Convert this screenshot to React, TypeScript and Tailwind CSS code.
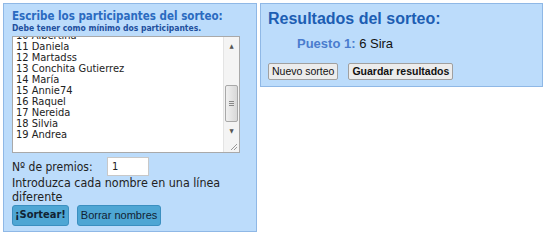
import React from 'react';

const names = [
  '10 Albertina',
  '11 Daniela',
  '12 Martadss',
  '13 Conchita Gutierrez',
  '14 María',
  '15 Annie74',
  '16 Raquel',
  '17 Nereida',
  '18 Silvia',
  '19 Andrea',
];

export default function App() {
  return (
    <div className="w-[550px] h-[244px] bg-white flex items-start gap-[3px] pl-[3px] pt-[3px]" style={{ fontFamily: '"DejaVu Sans Condensed", "DejaVu Sans", Verdana, sans-serif' }}>
      {/* left panel */}
      <div className="w-[254px] h-[229px] bg-[#bcdcfb] border border-[#8fb8e6] px-[8px] pt-[5px] flex flex-col">
        <h2 className="text-[11.5px] leading-[14px] font-bold text-[#2a6ac0] whitespace-nowrap">Escribe los participantes del sorteo:</h2>
        <p className="text-[8.5px] leading-[11px] font-bold text-[#1e4f9e] whitespace-nowrap">Debe tener como mínimo dos participantes.</p>
        <div className="mt-[2px] w-[228px] h-[117px] bg-white border border-[#a9a9a9] flex overflow-hidden">
          <div className="flex-1 overflow-hidden pl-[3px]">
            <div className="-mt-[7px] text-[11px] leading-[11px] text-[#222]">
              {names.map(n => (
                <div key={n}>{n}</div>
              ))}
            </div>
          </div>
          <div className="w-[16px] flex flex-col bg-[#f4f4f4] border-l border-[#e4e4e4]">
            <div className="h-[16px] flex items-center justify-center text-[6px] text-[#555]">▲</div>
            <div className="flex-1 relative">
              <div className="absolute left-[1px] right-[1px] top-[32px] h-[37px] bg-gradient-to-r from-[#f0f0f0] to-[#d8d8d8] border border-[#a8a8a8] rounded-[2px] flex items-center justify-center">
                <div className="w-[5px] flex flex-col gap-[1px]">
                  <div className="h-px bg-[#888]" />
                  <div className="h-px bg-[#888]" />
                  <div className="h-px bg-[#888]" />
                </div>
              </div>
            </div>
            <div className="h-[16px] flex items-center justify-center text-[6px] text-[#555]">▼</div>
            <div className="h-[14px] bg-[#f4f4f4] flex items-end justify-end pr-[1px] pb-[1px]">
              <svg width="8" height="8" viewBox="0 0 8 8"><path d="M7 1L1 7M7 4L4 7" stroke="#999" strokeWidth="1" /></svg>
            </div>
          </div>
        </div>
        <div className="mt-[4px] h-[19px] flex items-center text-[12px] text-[#222]">
          <span className="w-[95px]">Nº de premios:</span>
          <div className="w-[42px] h-[19px] bg-white border border-[#c8c8c8] text-[11px] leading-[17px] pl-[4px]">1</div>
        </div>
        <p className="text-[12.4px] leading-[14px] text-[#222]">Introduzca cada nombre en una línea diferente</p>
        <div className="mt-[1px] flex gap-[8px]">
          <button className="h-[21px] px-[2px] bg-[#4ea6d4] border border-[#3b8fc0] rounded-[3px] text-[11px] font-bold text-[#123]">¡Sortear!</button>
          <button className="h-[21px] px-[3px] bg-[#4ea6d4] border border-[#3b8fc0] rounded-[3px] text-[11px] text-[#123]" style={{ fontFamily: '"Liberation Sans", Arial, sans-serif' }}>Borrar nombres</button>
        </div>
      </div>

      {/* right panel */}
      <div className="w-[283px] h-[84px] bg-[#bcdcfb] border border-[#8fb8e6] px-[7px] pt-[5px]" style={{ fontFamily: '"Liberation Sans", Arial, sans-serif' }}>
        <h2 className="text-[16px] leading-[19px] font-bold text-[#1d5eb3]">Resultados del sorteo:</h2>
        <p className="mt-[8px] pl-[29px] text-[13px] leading-[15px] text-[#111]">
          <span className="font-bold text-[#4a7cce]">Puesto 1:</span> 6 Sira
        </p>
        <div className="mt-[12px] flex gap-[10px]">
          <button className="h-[17px] px-[3px] bg-[#ececec] border border-[#a0a0a0] rounded-[2px] text-[10.5px] leading-[15px] text-[#111]">Nuevo sorteo</button>
          <button className="h-[17px] px-[3px] bg-[#ececec] border border-[#a0a0a0] rounded-[2px] text-[10.5px] leading-[15px] font-bold text-[#111]">Guardar resultados</button>
        </div>
      </div>
    </div>
  );
}
